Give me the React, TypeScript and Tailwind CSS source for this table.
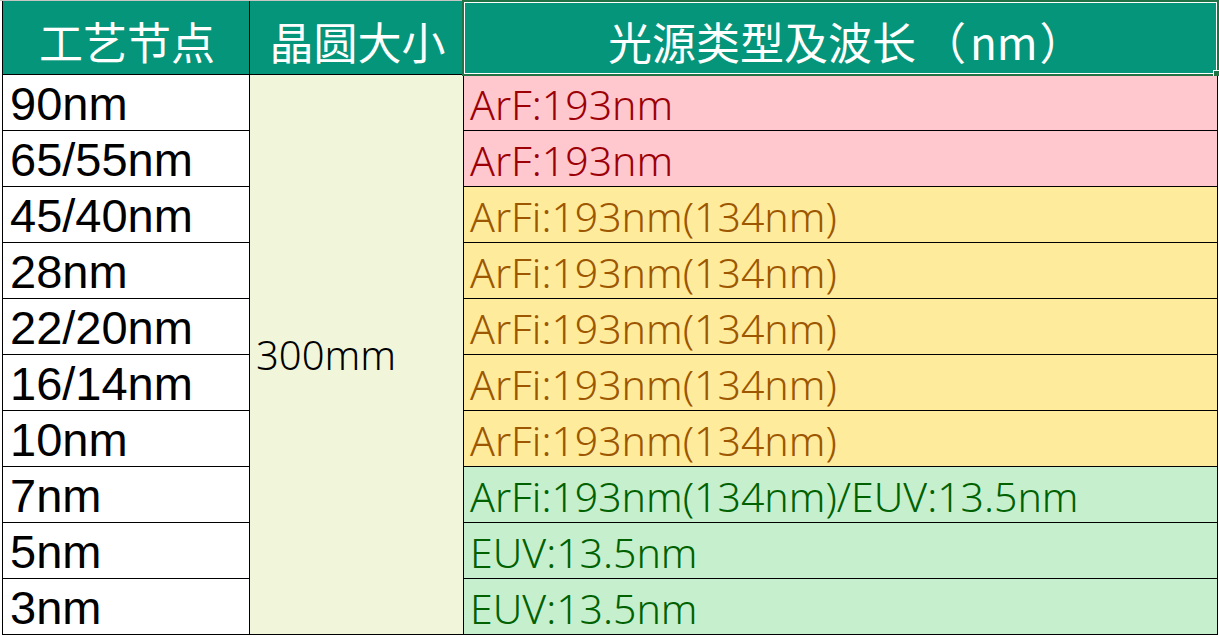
import React from "react";

type Row = { node: string; src: string; kind: "red" | "yellow" | "green" };

const rows: Row[] = [
  { node: "90nm", src: "ArF:193nm", kind: "red" },
  { node: "65/55nm", src: "ArF:193nm", kind: "red" },
  { node: "45/40nm", src: "ArFi:193nm(134nm)", kind: "yellow" },
  { node: "28nm", src: "ArFi:193nm(134nm)", kind: "yellow" },
  { node: "22/20nm", src: "ArFi:193nm(134nm)", kind: "yellow" },
  { node: "16/14nm", src: "ArFi:193nm(134nm)", kind: "yellow" },
  { node: "10nm", src: "ArFi:193nm(134nm)", kind: "yellow" },
  { node: "7nm", src: "ArFi:193nm(134nm)/EUV:13.5nm", kind: "green" },
  { node: "5nm", src: "EUV:13.5nm", kind: "green" },
  { node: "3nm", src: "EUV:13.5nm", kind: "green" },
];

const kindCls: Record<Row["kind"], string> = {
  red: "bg-[#FFC7CE] text-[#9C0006]",
  yellow: "bg-[#FFEB9C] text-[#9C5700]",
  green: "bg-[#C6EFCE] text-[#006100]",
};

const cjk = "font-['Noto_Sans_CJK_SC','Noto_Sans',sans-serif]";
const latin = "font-['Noto_Sans','Noto_Sans_CJK_SC',sans-serif] font-light";

export default function App() {
  return (
    <div className="w-[1219px] h-[637px] bg-white overflow-hidden relative">
      <div className="h-px bg-[#c6c6c6]" />
      <div className="ml-[2px] w-[1216px] border-l border-black grid grid-cols-[247px_214px_754px] grid-rows-[74px_repeat(10,56px)]">
        {/* header */}
        <div className={`bg-[#04957A] border-r border-b border-black flex items-end justify-center pb-[11px] pl-[2px] text-white text-[44px] leading-none ${cjk}`}>
          工艺节点
        </div>
        <div className={`bg-[#04957A] border-r border-b border-black flex items-end justify-center pb-[11px] pl-[2px] text-white text-[44px] leading-none ${cjk}`}>
          晶圆大小
        </div>
        <div className={`relative bg-[#04957A] border-r border-b border-black flex items-end justify-start pb-[11px] pl-[144px] text-white text-[44px] leading-none whitespace-nowrap ${cjk}`}>
          <span>光源类型及波长</span>
          <span className="ml-[6px]">（</span>
          <span className="ml-[4px]">nm</span>
          <span className="ml-[2px]">）</span>
          <div className="absolute left-[-2px] top-[-1px] right-[-2px] bottom-[-2px] border-2 border-[#217346] z-10 pointer-events-none">
            <div className="absolute inset-0 border border-white" />
          </div>
          <div className="absolute right-[-2px] bottom-[-2px] w-[6px] h-[6px] bg-[#217346] border-l border-t border-white z-20" />
        </div>

        {/* merged wafer size cell */}
        <div
          className={`row-start-2 row-end-[12] col-start-2 bg-[#F1F5DA] border-r border-b border-black flex items-center pl-[6px] pt-[1px] text-[40px] leading-none text-black ${latin}`}
        >
          300mm
        </div>

        {rows.map((r, i) => (
          <React.Fragment key={i}>
            <div
              className="col-start-1 bg-white border-r border-b border-black flex items-center pl-[7px] pt-[1px] text-[47px] leading-none text-black font-['Liberation_Sans',Arial,sans-serif]"
              style={{ gridRowStart: i + 2 }}
            >
              {r.node}
            </div>
            <div
              className={`col-start-3 border-r border-b border-black flex items-center pl-[6px] pt-[3px] text-[41px] leading-none whitespace-nowrap ${kindCls[r.kind]} ${latin}`}
              style={{ gridRowStart: i + 2 }}
            >
              {r.src}
            </div>
          </React.Fragment>
        ))}
      </div>
    </div>
  );
}
